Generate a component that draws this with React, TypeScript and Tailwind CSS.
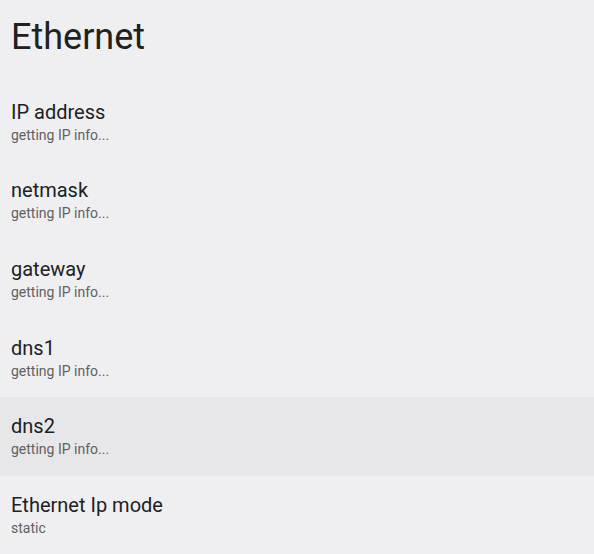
const rows = [
  { title: "IP address", sub: "getting IP info..." },
  { title: "netmask", sub: "getting IP info..." },
  { title: "gateway", sub: "getting IP info..." },
  { title: "dns1", sub: "getting IP info..." },
  { title: "dns2", sub: "getting IP info...", active: true },
  { title: "Ethernet Ip mode", sub: "static" },
];

export default function App() {
  return (
    <div className="w-[594px] h-[554px] overflow-hidden bg-[#efeff1] font-['Roboto',sans-serif]">
      <div className="h-[83px] px-[11px] pt-[13px]">
        <h1 className="text-[36px] leading-[48px] text-[#212121]">Ethernet</h1>
      </div>
      {rows.map((r) => (
        <div
          key={r.title}
          className={
            "h-[78.6px] px-[11px] flex flex-col justify-center " +
            (r.active ? "bg-[#e7e7e9]" : "")
          }
        >
          <div className="text-[20px] leading-[24px] -mt-[1px] text-[#202124]">{r.title}</div>
          <div className="text-[14px] leading-[18px] mt-[2px] text-[#5f6163]">{r.sub}</div>
        </div>
      ))}
    </div>
  );
}
